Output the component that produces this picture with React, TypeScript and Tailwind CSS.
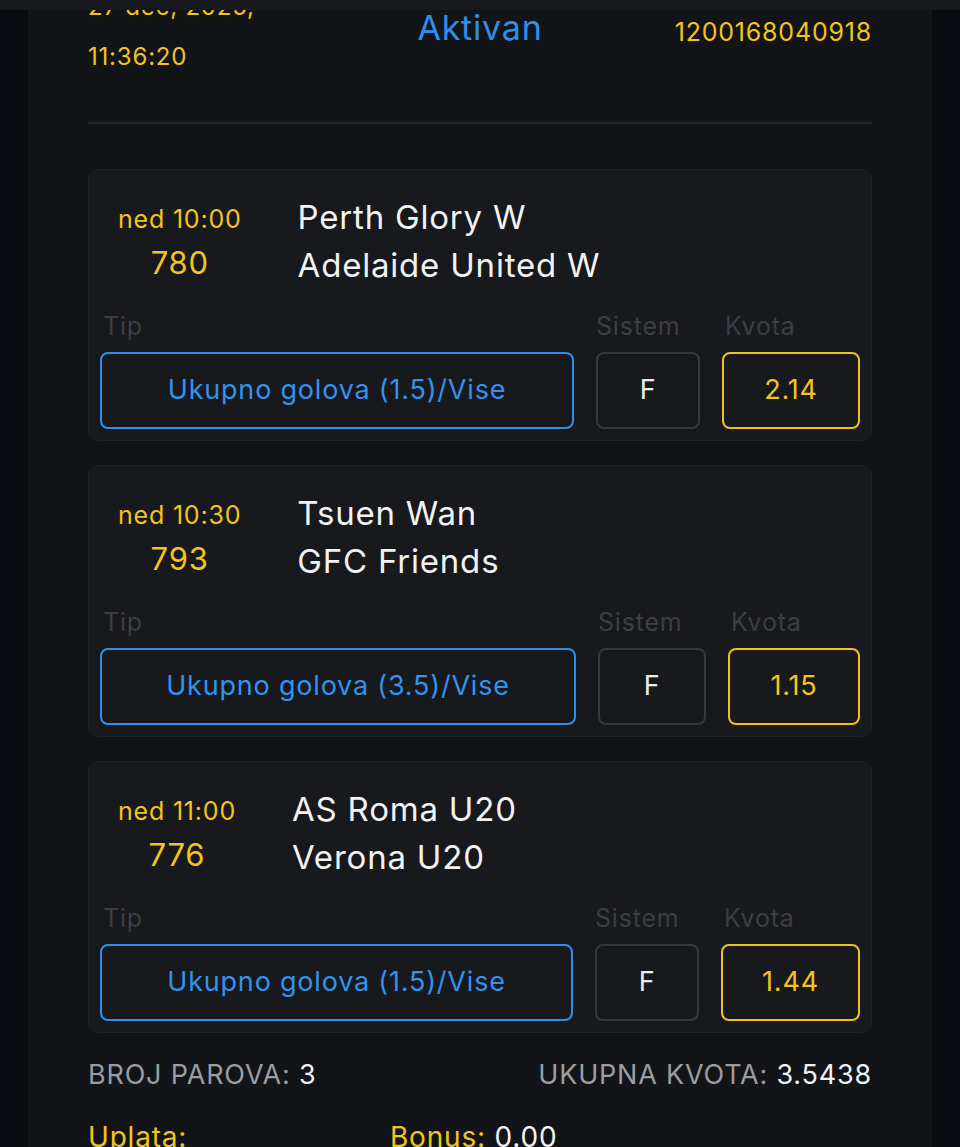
import React from "react";

type Match = {
  time: string;
  code: string;
  home: string;
  away: string;
  tip: string;
  odd: string;
  cols: string;
};

const matches: Match[] = [
  {
    time: "ned 10:00",
    code: "780",
    home: "Perth Glory W",
    away: "Adelaide United W",
    tip: "Ukupno golova (1.5)/Vise",
    odd: "2.14",
    cols: "grid-cols-[1fr_104px_138px]",
  },
  {
    time: "ned 10:30",
    code: "793",
    home: "Tsuen Wan",
    away: "GFC Friends",
    tip: "Ukupno golova (3.5)/Vise",
    odd: "1.15",
    cols: "grid-cols-[1fr_108px_132px]",
  },
  {
    time: "ned 11:00",
    code: "776",
    home: "AS Roma U20",
    away: "Verona U20",
    tip: "Ukupno golova (1.5)/Vise",
    odd: "1.44",
    cols: "grid-cols-[1fr_104px_139px]",
  },
];

const MatchCard = ({ m }: { m: Match }) => (
  <div className="rounded-[10px] border border-[#1f2226] bg-[#17191d] px-[11px] pt-[23px] pb-[11px]">
    {/* teams */}
    <div className="flex items-start gap-[56px] pl-[18px]">
      <div className="flex flex-col items-center text-[#f3c41d]">
        <span className="text-[25px] leading-[52px]">{m.time}</span>
        <span className="text-[31px] leading-[44px] -mt-[4px]">{m.code}</span>
      </div>
      <div className="flex flex-col text-[33px] leading-[48px] text-[#f2f2f2]">
        <span>{m.home}</span>
        <span>{m.away}</span>
      </div>
    </div>

    {/* tip row */}
    <div className={`mt-[21px] grid ${m.cols} gap-x-[22px] gap-y-[10px]`}>
      <span className="pl-[3px] text-[25px] leading-[32px] text-[#3b3e43]">Tip</span>
      <span className="text-[25px] leading-[32px] text-[#3b3e43]">Sistem</span>
      <span className="pl-[3px] text-[25px] leading-[32px] text-[#3b3e43]">Kvota</span>
      <div className="flex h-[77px] items-center justify-center rounded-[8px] border-2 border-[#2f8fe8] text-[27px] text-[#3392ec]">
        {m.tip}
      </div>
      <div className="flex h-[77px] items-center justify-center rounded-[8px] border-2 border-[#36393e] text-[27px] text-[#ececec]">
        F
      </div>
      <div className="flex h-[77px] items-center justify-center rounded-[8px] border-2 border-[#f0c11b] text-[27px] text-[#f3c41d]">
        {m.odd}
      </div>
    </div>
  </div>
);

export default function App() {
  return (
    <div className="h-[1147px] overflow-hidden bg-[#0a0b10] font-['Inter',sans-serif] tracking-[0.05em]">
      <div className="h-[10px] bg-[#17191d]" />
      <div className="mx-[28px] h-[1137px] overflow-hidden bg-[#121418] px-[60px]">
        {/* header */}
        <div className="-mt-[28px] grid grid-cols-3 items-start">
          <div className="flex flex-col text-[24px] leading-[50px] text-[#f3c41d]">
            <span>27 dec, 2025,</span>
            <span>11:36:20</span>
          </div>
          <div className="pt-[22px] text-center text-[34px] leading-[48px] text-[#2f8fe8]">Aktivan</div>
          <div className="pt-[26px] text-right text-[25px] leading-[48px] text-[#f3c41d]">1200168040918</div>
        </div>

        <div className="mt-[40px] h-[2px] bg-[#212429]" />

        <div className="mt-[45px] flex flex-col gap-[24px]">
          {matches.map((m) => (
            <MatchCard key={m.code} m={m} />
          ))}
        </div>

        {/* totals */}
        <div className="mt-[24px] flex items-center justify-between text-[27px] leading-[36px]">
          <span className="text-[#9b9da1]">
            BROJ PAROVA: <span className="text-[#f2f2f2]">3</span>
          </span>
          <span className="text-[#9b9da1]">
            UKUPNA KVOTA: <span className="text-[#f2f2f2]">3.5438</span>
          </span>
        </div>

        <div className="mt-[24px] flex text-[28px] leading-[40px]">
          <span className="w-[302px] text-[#f3c41d]">Uplata:</span>
          <span className="text-[#f3c41d]">
            Bonus: <span className="text-[#f2f2f2]">0.00</span>
          </span>
        </div>
      </div>
    </div>
  );
}
